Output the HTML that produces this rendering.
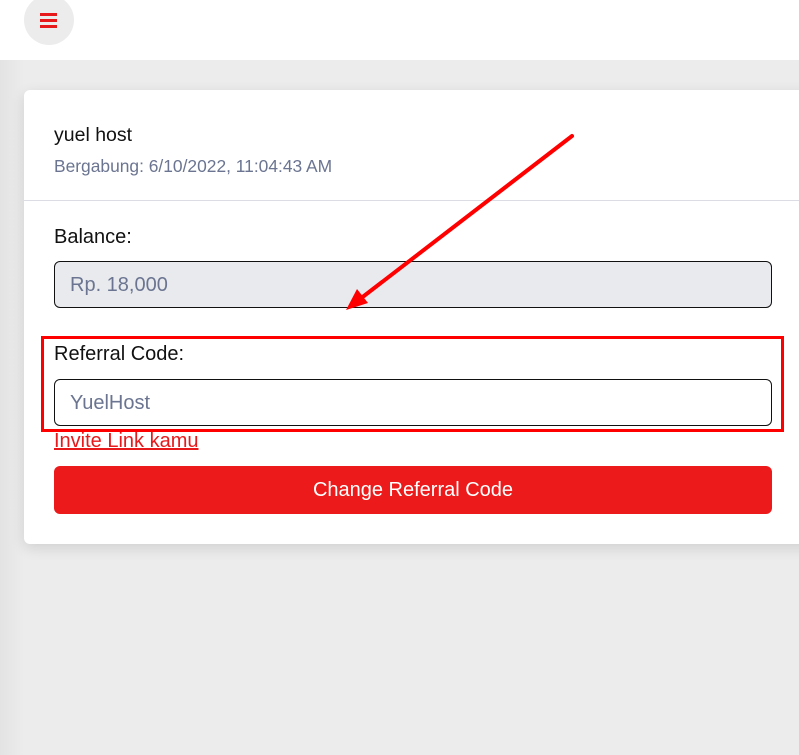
<!DOCTYPE html>
<html><head><meta charset="utf-8">
<style>
*{box-sizing:border-box;margin:0;padding:0}
body{width:799px;height:755px;overflow:hidden;background:#ececec;font-family:"Liberation Sans",Arial,sans-serif;position:relative}
.side{position:absolute;left:0;top:60px;width:24px;height:695px;background:linear-gradient(90deg,#e3e3e3,#ececec)}
.hdr{position:absolute;left:0;top:0;width:799px;height:60px;background:#fff}
.burger{position:absolute;left:24px;top:-5px;width:50px;height:50px;border-radius:50%;background:#ececec}
.burger i{position:absolute;left:16px;width:17px;height:2.5px;background:#e8191b}
.card{position:absolute;left:24px;top:90px;width:800px;height:454px;background:#fff;border-radius:6px;box-shadow:0 4px 14px rgba(0,0,0,.12)}
.t{position:absolute;left:54px}
.inp{position:absolute;left:54px;width:718px;height:47px;border:1px solid #111;border-radius:6px;font-size:20px;color:#6b7591;padding:12px 15px}
</style></head><body>
<div class="hdr"><div class="burger"><i style="top:18px"></i><i style="top:24px"></i><i style="top:30px"></i></div></div>
<div class="side"></div>
<div class="card"></div>
<div class="t" style="top:124px;font-size:19.5px;color:#111">yuel host</div>
<div class="t" style="top:156px;font-size:17.4px;color:#6b7591">Bergabung: 6/10/2022, 11:04:43 AM</div>
<div style="position:absolute;left:24px;top:200px;width:775px;height:1px;background:#dcdce4"></div>
<div class="t" style="top:226px;font-size:20px;color:#111">Balance:</div>
<div class="inp" style="top:261px;background:#e8eaee">Rp. 18,000</div>
<div class="t" style="top:343px;font-size:20px;color:#111">Referral Code:</div>
<div class="inp" style="top:379px;background:#fff">YuelHost</div>
<div class="t" style="top:430px;font-size:20px;color:#e8191b;text-decoration:underline">Invite Link kamu</div>
<div style="position:absolute;left:54px;top:466px;width:718px;height:48px;background:#ec1a1a;border-radius:6px;color:#fff;font-size:20px;text-align:center;line-height:48px">Change Referral Code</div>
<div style="position:absolute;left:41px;top:336px;width:743px;height:96px;border:3px solid #ff0000"></div>
<svg style="position:absolute;left:0;top:0" width="799" height="755">
<line x1="572" y1="136" x2="360" y2="299" stroke="#ff0000" stroke-width="4" stroke-linecap="round"/>
<polygon points="346,310 357,289 368,303" fill="#ff0000"/>
</svg>
</body></html>
